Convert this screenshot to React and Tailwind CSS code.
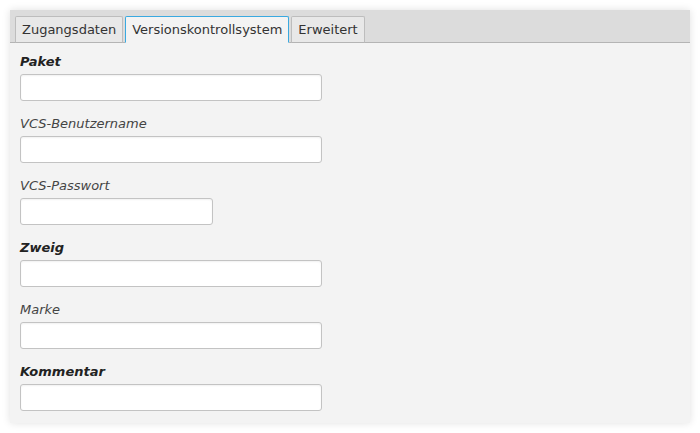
import React from 'react';

const fields = [
  { label: 'Paket', required: true, width: 'w-[302px]' },
  { label: 'VCS-Benutzername', required: false, width: 'w-[302px]' },
  { label: 'VCS-Passwort', required: false, width: 'w-[193px]', type: 'password' },
  { label: 'Zweig', required: true, width: 'w-[302px]' },
  { label: 'Marke', required: false, width: 'w-[302px]' },
  { label: 'Kommentar', required: true, width: 'w-[302px]' },
];

const tabs = ['Zugangsdaten', 'Versionskontrollsystem', 'Erweitert'];

const App = () => {
  return (
    <div className="w-[700px] h-[433px] bg-white p-[10px] font-['DejaVu_Sans',sans-serif] text-[13px] text-[#333]">
      <div className="h-[413px] bg-[#f3f3f3] shadow-[0_0_8px_rgba(0,0,0,0.12)] flex flex-col">
        {/* Tab bar */}
        <div className="h-[33px] bg-[#dcdcdc] border-b border-[#b4b4b4] flex items-end gap-[2px] pl-[5px]">
          {tabs.map((tab, i) => {
            const active = i === 1;
            return (
              <div
                key={tab}
                className={`h-[27px] -mb-px px-[6px] flex items-center rounded-t-[2px] border ${
                  active
                    ? 'bg-[#f3f3f3] border-[#3aa9e0] border-b-[#f3f3f3] text-[#333]'
                    : 'bg-[#e8e8e8] border-[#bdbdbd] border-b-[#b4b4b4] text-[#333]'
                }`}
              >
                {tab}
              </div>
            );
          })}
        </div>

        {/* Form */}
        <div className="flex flex-col gap-[15px] pl-[10px] pt-[11px]">
          {fields.map((f) => (
            <div key={f.label} className="flex flex-col gap-[4px]">
              <label
                className={`italic leading-[16px] ${f.required ? 'font-bold text-[#222]' : 'text-[#444]'}`}
              >
                {f.label}
              </label>
              <input
                type={f.type || 'text'}
                className={`${f.width} h-[27px] bg-white border border-[#c3c3c3] rounded-[3px] shadow-[inset_0_1px_2px_rgba(0,0,0,0.06)] outline-none`}
              />
            </div>
          ))}
        </div>
      </div>
    </div>
  );
};

export default App;
